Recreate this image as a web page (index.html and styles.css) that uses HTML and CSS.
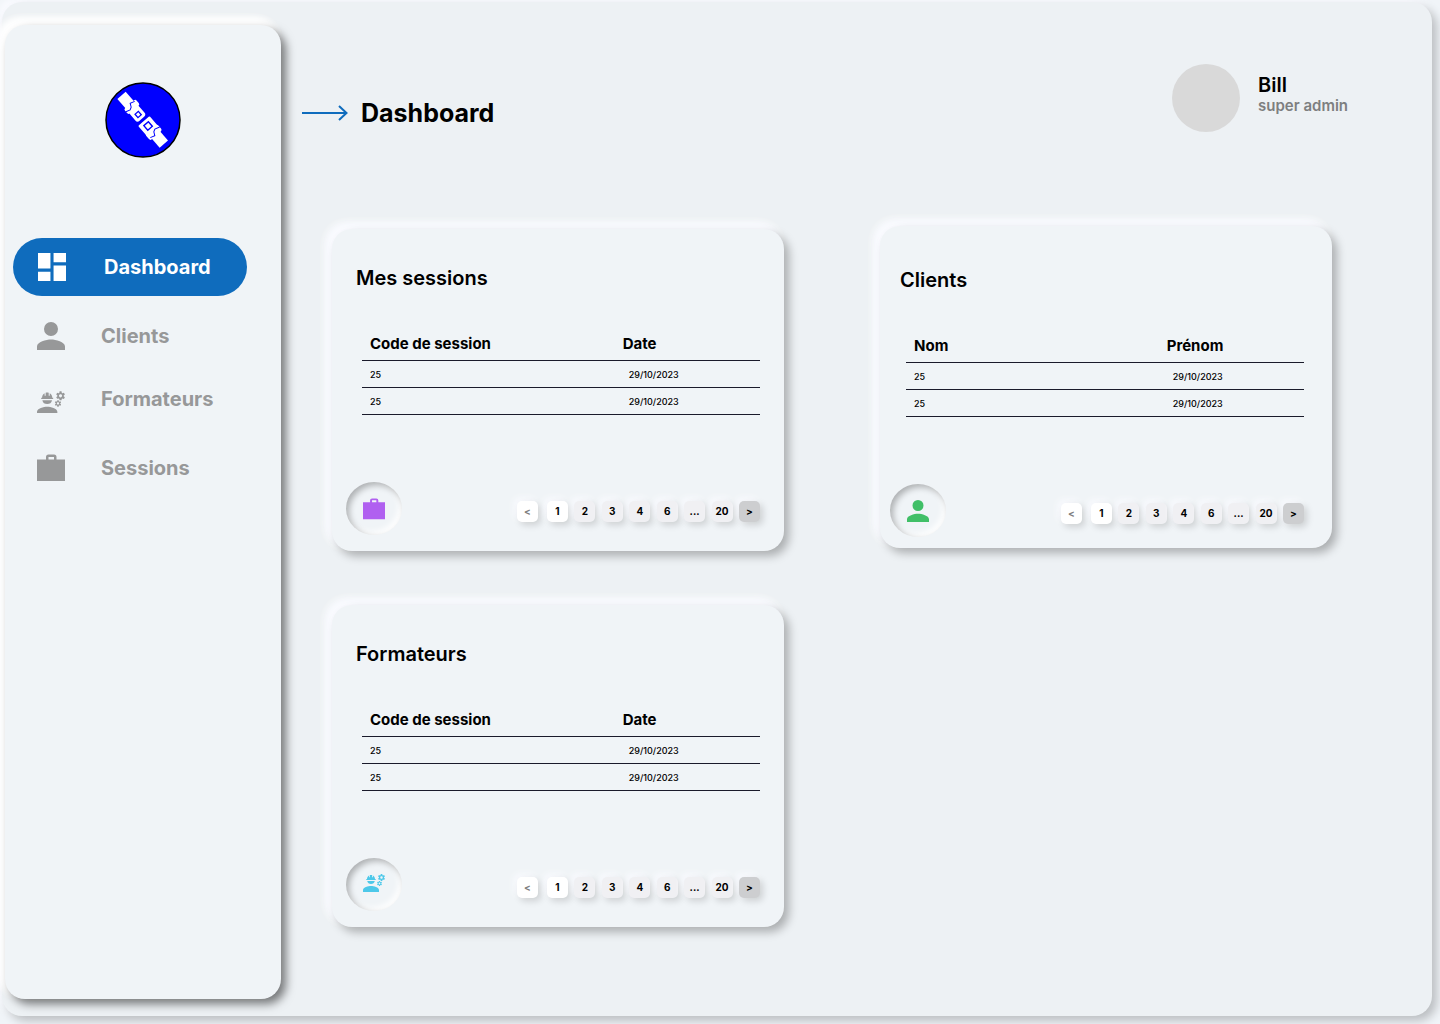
FILE: index.html
```html
<!DOCTYPE html>
<html lang="fr">
<head>
<meta charset="utf-8">
<meta name="viewport" content="width=device-width, initial-scale=1">
<title>Dashboard</title>
<link rel="stylesheet" href="styles.css">
</head>
<body>
<svg class="sprite" aria-hidden="true">
  <defs>
    <path id="i-dashboard" d="M3 13h8V3H3v10zm0 8h8v-6H3v6zm10 0h8V11h-8v10zm0-18v6h8V3h-8z"/>
    <path id="i-person" d="M12 12a4 4 0 1 0 0-8 4 4 0 0 0 0 8zm0 2c-2.670 0-8 1.340-8 4v2h16v-2c0-2.660-5.330-4-8-4z"/>
    <path id="i-engineer" fill-rule="evenodd" d="M9 15c-2.670 0-8 1.340-8 4v2h16v-2c0-2.660-5.330-4-8-4zM5.200 10a3.900 3.900 0 0 0 7.600 0zM4.300 9h9.400V8H13c0-1.480-.81-2.750-2-3.450v1.800h-.8V4.100C9.680 4 9.350 3.900 9 3.900s-.68.1-1.200.2v2.250H7v-1.800C5.810 5.250 5 6.520 5 8h-.7zM21.980 6.230l.93-.83-.75-1.300-1.190.39c-.14-.11-.3-.2-.47-.27L20.250 3h-1.500l-.25 1.220c-.17.07-.33.16-.48.27l-1.180-.39-.75 1.300.93.83c-.02.17-.02.35 0 .52l-.93.85.75 1.300 1.200-.38c.13.1.28.18.43.25l.28 1.230h1.500l.27-1.220c.16-.07.3-.15.44-.25l1.190.38.75-1.300-.93-.85c.03-.19.02-.37 0-.53zM19.500 7.750c-.69 0-1.250-.56-1.250-1.250s.56-1.250 1.250-1.250 1.250.56 1.250 1.250-.56 1.250-1.250 1.250zM19.400 10.790l-.85.28c-.1-.08-.21-.14-.33-.19l-.18-.88h-1.070l-.18.87c-.12.05-.24.12-.34.19l-.84-.28-.54.93.66.59c-.01.13-.01.25 0 .37l-.66.61.54.93.86-.27c.1.07.2.13.31.18l.18.88h1.070l.19-.87c.11-.05.22-.11.32-.18l.85.27.54-.93-.66-.61c.01-.13.01-.25 0-.37l.66-.59-.53-.93zm-1.900 2.600c-.49 0-.89-.4-.89-.89s.4-.89.89-.89.89.4.89.89-.4.89-.89.89z"/>
    <path id="i-work" fill-rule="evenodd" d="M0 5.500h9V3A2.500 2.500 0 0 1 11.500.5h5.500A2.500 2.500 0 0 1 19.500 3v2.500H28V27H0zM11.500 5.500h5.500V3h-5.500z"/>
  </defs>
</svg>

<div class="frame">
  <aside class="sidebar">
    <svg class="logo" viewBox="0 0 76 76" role="img" aria-label="Logo">
      <circle cx="38" cy="38" r="37" fill="#00f" stroke="#000" stroke-width="1.500"/>
      <g transform="translate(37.500 37.500) rotate(49)" fill="#fff">
        <rect x="-32" y="-5.500" width="15" height="11"/>
        <rect x="-20" y="-8" width="7" height="15.500" rx="2"/>
        <rect x="-17" y="-6" width="16" height="12" rx="3"/>
        <path d="M-17 8-15.400 3-16.700.5-20.400-1.400-18.800-6" fill="none" stroke="#00f"/>
        <rect x="-8.800" y="-2.200" width="4.400" height="4.400" fill="none" stroke="#00f" stroke-width="1.300"/>
        <rect x="2" y="-7.500" width="16" height="15" rx="1"/>
        <rect x="13" y="-8" width="8" height="16" rx="2"/>
        <rect x="18" y="-5.500" width="14.500" height="11"/>
        <rect x="5.500" y="-3" width="6" height="6" fill="none" stroke="#00f" stroke-width="1.400"/>
        <path d="M17-8 15.400-3 16.700-.5 20.400 1.400 18.800 6" fill="none" stroke="#00f"/>
      </g>
    </svg>
    <nav class="nav" aria-label="Navigation principale">
      <div class="nav-group">
        <a class="nav-item nav-item--active" href="#dashboard" aria-current="page"><svg class="nav-icon" viewBox="3 3 18 18"><use href="#i-dashboard"/></svg>Dashboard</a>
        <a class="nav-item" href="#clients"><svg class="nav-icon" viewBox="4 4 16 16"><use href="#i-person"/></svg>Clients</a>
      </div>
      <div class="nav-group">
        <a class="nav-item" href="#formateurs"><svg class="nav-icon" viewBox="1 -2 22 22"><use href="#i-engineer"/></svg>Formateurs</a>
        <a class="nav-item" href="#sessions"><svg class="nav-icon" viewBox="0 0 28 28"><use href="#i-work"/></svg>Sessions</a>
      </div>
    </nav>
  </aside>

  <main class="main">
    <header class="header">
      <div class="heading">
        <svg class="arrow" viewBox="0 0 46 16" aria-hidden="true"><path d="M0 8h45M37 1l7.500 7-7.500 7"/></svg>
        <h1 class="title">Dashboard</h1>
      </div>
      <div class="user">
        <div class="avatar"></div>
        <div class="user-text">
          <div class="user-name">Bill</div>
          <div class="user-role">super admin</div>
        </div>
      </div>
    </header>

    <div class="board">
      <div class="column">
        <section class="card">
          <h2 class="card-title">Mes sessions</h2>
          <div class="table-wrap">
            <table class="table">
              <thead><tr><th>Code de session</th><th>Date</th></tr></thead>
              <tbody>
                <tr><td>25</td><td>29/10/2023</td></tr>
                <tr><td>25</td><td>29/10/2023</td></tr>
              </tbody>
            </table>
          </div>
          <div class="card-footer">
            <span class="well well--purple"><svg class="well-icon" viewBox="0 0 28 28"><use href="#i-work"/></svg></span>
            <div class="pager">
              <button class="page page--prev" type="button">&lt;</button>
              <div class="pages">
                <button class="page page--current" type="button">1</button>
                <button class="page" type="button">2</button>
                <button class="page" type="button">3</button>
                <button class="page" type="button">4</button>
                <button class="page" type="button">6</button>
                <button class="page" type="button">...</button>
                <button class="page" type="button">20</button>
                <button class="page page--next" type="button">&gt;</button>
              </div>
            </div>
          </div>
        </section>

        <section class="card">
          <h2 class="card-title">Formateurs</h2>
          <div class="table-wrap">
            <table class="table">
              <thead><tr><th>Code de session</th><th>Date</th></tr></thead>
              <tbody>
                <tr><td>25</td><td>29/10/2023</td></tr>
                <tr><td>25</td><td>29/10/2023</td></tr>
              </tbody>
            </table>
          </div>
          <div class="card-footer">
            <span class="well well--cyan"><svg class="well-icon" viewBox="1 3 22 22"><use href="#i-engineer"/></svg></span>
            <div class="pager">
              <button class="page page--prev" type="button">&lt;</button>
              <div class="pages">
                <button class="page page--current" type="button">1</button>
                <button class="page" type="button">2</button>
                <button class="page" type="button">3</button>
                <button class="page" type="button">4</button>
                <button class="page" type="button">6</button>
                <button class="page" type="button">...</button>
                <button class="page" type="button">20</button>
                <button class="page page--next" type="button">&gt;</button>
              </div>
            </div>
          </div>
        </section>
      </div>

      <div class="column">
        <section class="card card--clients">
          <h2 class="card-title">Clients</h2>
          <div class="table-wrap">
            <table class="table">
              <thead><tr><th>Nom</th><th>Prénom</th></tr></thead>
              <tbody>
                <tr><td>25</td><td>29/10/2023</td></tr>
                <tr><td>25</td><td>29/10/2023</td></tr>
              </tbody>
            </table>
          </div>
          <div class="card-footer">
            <span class="well well--green"><svg class="well-icon" viewBox="4 4 16 16"><use href="#i-person"/></svg></span>
            <div class="pager">
              <button class="page page--prev" type="button">&lt;</button>
              <div class="pages">
                <button class="page page--current" type="button">1</button>
                <button class="page" type="button">2</button>
                <button class="page" type="button">3</button>
                <button class="page" type="button">4</button>
                <button class="page" type="button">6</button>
                <button class="page" type="button">...</button>
                <button class="page" type="button">20</button>
                <button class="page page--next" type="button">&gt;</button>
              </div>
            </div>
          </div>
        </section>
      </div>
    </div>
  </main>
</div>
</body>
</html>
```
FILE: styles.css
```css
* {
  box-sizing: border-box;
}

body {
  display: flex;
  min-height: 100vh;
  margin: 0;
  padding: 2px 8px 8px 2px;
  background: #f0f4f8;
  color: #000;
  font-family: Inter, "Liberation Sans", sans-serif;
}

.sprite {
  position: absolute;
  width: 0;
  height: 0;
}

.frame {
  display: flex;
  flex: 1;
  min-width: 0;
  border-radius: 20px;
  background: #edf1f4;
  box-shadow: 5px 5px 10px rgba(0, 0, 0, 0.22), -5px -5px 10px #fafbff;
}

/* Sidebar */
.sidebar {
  display: flex;
  flex: 0 0 276px;
  flex-direction: column;
  margin: 23px 0 17px 3px;
  padding: 57px 8px;
  border-radius: 20px;
  background: #f0f4f7;
  box-shadow: 5px 5px 10px rgba(0, 0, 0, 0.5), -5px -5px 10px #fff, -5px -5px 10px #fff, -5px -5px 10px #fff;
}

.logo {
  align-self: center;
  width: 76px;
  height: 76px;
}

.nav {
  display: flex;
  flex-direction: column;
  gap: 5px;
  margin-top: 80px;
}

.nav-group {
  display: flex;
  flex-direction: column;
  gap: 11px;
}

.nav-item {
  display: flex;
  align-items: center;
  gap: 36px;
  width: 234px;
  height: 58px;
  padding-left: 24px;
  border-radius: 29px;
  color: #979899;
  font-size: 20px;
  font-weight: 700;
  line-height: 24px;
  text-decoration: none;
}

.nav-item--active {
  gap: 38px;
  padding-left: 25px;
  background: #0f6cbd;
  color: #fff;
}

.nav-icon {
  width: 28px;
  height: 28px;
  fill: currentColor;
}

/* Header */
.main {
  flex: 1;
  min-width: 0;
  padding-top: 62px;
}

.header {
  display: flex;
  align-items: flex-end;
  justify-content: space-between;
  padding: 0 84px 0 21px;
}

.heading {
  display: flex;
  align-items: center;
  gap: 13px;
}

.arrow {
  width: 46px;
  height: 16px;
  fill: none;
  stroke: #0f6cbd;
  stroke-width: 2;
}

.title {
  margin: 0;
  font-size: 25px;
  font-weight: 700;
  line-height: 38px;
}

.user {
  display: flex;
  gap: 18px;
}

.avatar {
  width: 68px;
  height: 68px;
  border-radius: 50%;
  background: #d9d9d9;
}

.user-text {
  padding-top: 9px;
}

.user-name {
  font-size: 20px;
  font-weight: 600;
  line-height: 24px;
}

.user-role {
  color: #7d7f80;
  font-size: 15px;
  font-weight: 600;
  line-height: 18px;
}

/* Cards */
.board {
  display: grid;
  grid-template-columns: 1fr 1fr;
  gap: 96px;
  padding: 94px 100px 80px 51px;
}

.column {
  display: flex;
  flex-direction: column;
  gap: 54px;
}

.column:first-child {
  padding-top: 3px;
}

.card {
  padding: 35px 24px 16px 14px;
  border-radius: 20px;
  background: #f0f4f7;
  box-shadow: 5px 5px 10px rgba(0, 0, 0, 0.28), -5px -5px 10px #fafbff, -5px -5px 10px #fafbff;
}

.card--clients {
  padding: 40px 28px 11px 10px;
}

.card-title {
  margin: 0 0 36px 10px;
  font-size: 20px;
  font-weight: 600;
  line-height: 28px;
}

.table-wrap {
  padding-left: 16px;
}

.table {
  width: 100%;
  border-collapse: separate;
  border-spacing: 0;
  table-layout: fixed;
}

.table th,
.table td {
  padding: 0 8px;
  border-bottom: 1px solid #1a1a2b;
  text-align: left;
}

.table th {
  height: 33px;
  font-size: 15px;
  font-weight: 700;
  line-height: 32px;
}

.table td {
  height: 27px;
  padding-top: 2px;
  font-size: 9px;
  font-weight: 500;
  line-height: 24px;
}

.table th:first-child {
  width: 64%;
}

.table th + th {
  padding-left: 6px;
}

.table td + td {
  padding-left: 12px;
}

.card-footer {
  display: flex;
  align-items: center;
  justify-content: space-between;
  margin-top: 67px;
}

.well {
  display: flex;
  align-items: center;
  justify-content: center;
  width: 56px;
  height: 53px;
  border-radius: 50%;
  box-shadow: inset 3px 3px 6px rgba(0, 0, 0, 0.28), inset -3px -3px 6px #fff;
}

.well-icon {
  width: 22px;
  height: 22px;
  fill: currentColor;
}

.well--purple {
  color: #b060f0;
}

.well--green {
  color: #40bf67;
}

.well--cyan {
  color: #4dc8e9;
}

.pager {
  display: flex;
  gap: 9px;
  padding-top: 6px;
}

.pages {
  display: flex;
  justify-content: space-between;
  width: 213px;
}

.page {
  width: 21px;
  height: 21px;
  padding: 0;
  border: 0;
  border-radius: 5px;
  background: #f0f0f3;
  box-shadow: 3px 3px 7px rgba(0, 0, 0, 0.15), -3px -3px 7px #fafbff;
  color: #000;
  font-family: inherit;
  font-size: 10px;
  font-weight: 700;
  line-height: 21px;
  text-align: center;
}

.page--prev,
.page--current {
  background: #fff;
}

.page--prev {
  color: #808080;
}

.page--next {
  background: #cdced0;
}
```
